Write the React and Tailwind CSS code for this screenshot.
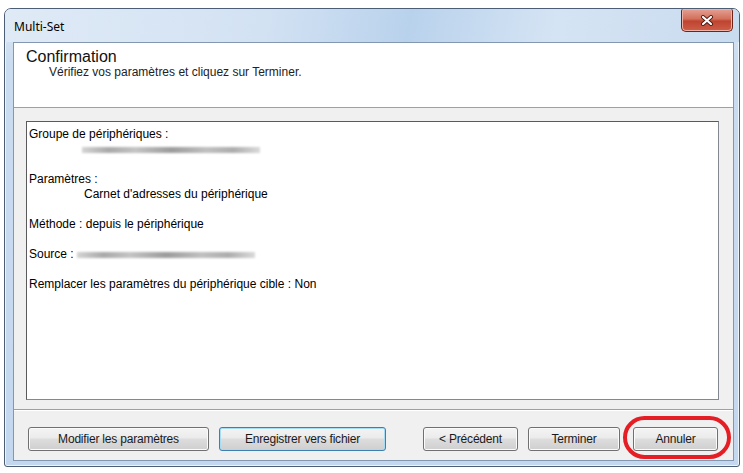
import React from "react";

const font = { fontFamily: '"Liberation Sans", Arial, sans-serif' };

const Blur = () => (
  <div className="h-[15px] flex items-center">
    <div className="h-[6px] w-[178px] blur-[1px] bg-[linear-gradient(90deg,#d4d4d4_0%,#a9a9a9_15%,#c4c4c4_30%,#9c9c9c_50%,#c0c0c0_70%,#adadad_85%,#dadada_100%)]" />
  </div>
);

const Button = ({ label, width, focused }) => (
  <div
    className={`h-[24px] rounded-[3px] border flex items-center justify-center text-[12px] tracking-[-0.2px] text-[#1a1a1a] bg-[linear-gradient(180deg,#f4f4f4_0%,#ebebeb_45%,#dddddd_50%,#cfcfcf_100%)] ${
      focused
        ? "border-[#3c7fb1] shadow-[inset_0_0_0_1px_#a8dcf5]"
        : "border-[#707070] shadow-[inset_0_0_0_1px_#fbfbfb]"
    }`}
    style={{ width }}
  >
    {label}
  </div>
);

export default function App() {
  return (
    <div className="w-[743px] h-[473px] bg-white relative overflow-hidden" style={font}>
      <div className="ml-[4px] mt-[8px] w-[736px] h-[459px] border border-[#4c5e75] rounded-t-[7px] rounded-b-[3px] flex flex-col bg-[linear-gradient(180deg,#dce8f5_0%,#cadcf0_12%,#c3d7ee_100%)] shadow-[inset_0_0_0_1px_#eef4fb]">
        {/* title bar */}
        <div className="h-[33px] flex justify-between items-start bg-[linear-gradient(100deg,#dfeaf6_0%,#d3e2f3_35%,#b9d2ec_55%,#d5e4f4_75%,#c9dbef_100%)] rounded-t-[6px]">
          <div className="pl-[9px] pt-[10px] text-[12px] text-black leading-[15px]" style={{ fontFamily: '"Noto Sans", "Liberation Sans", sans-serif' }}>
            Multi-Set
          </div>
          <div className="mr-[6px] w-[52px] h-[23px] rounded-b-[5px] rounded-t-[2px] border border-[#6e2418] border-t-0 flex items-center justify-center bg-[linear-gradient(180deg,#e3a194_0%,#d4705c_45%,#bf4430_55%,#cc5f49_100%)] shadow-[inset_0_0_0_1px_#eeb2a6]">
            <svg width="14" height="11" viewBox="0 0 14 11">
              <path d="M3 2 L11 9 M11 2 L3 9" stroke="#4a1a12" strokeWidth="4" strokeLinecap="round" />
              <path d="M3 2 L11 9 M11 2 L3 9" stroke="#ffffff" strokeWidth="2.2" strokeLinecap="round" />
            </svg>
          </div>
        </div>

        {/* client area */}
        <div className="flex-1 ml-[8px] mr-[5px] mb-[5px] border border-[#8497b0] flex flex-col bg-[#f0f0f0]">
          <div className="h-[65px] bg-white border-b border-[#a0a0a0] pl-[12px] pt-[5px]">
            <div className="text-[16px] leading-[17px] text-[#111]">Confirmation</div>
            <div className="text-[12px] leading-[14px] text-[#222] pl-[23px]">
              Vérifiez vos paramètres et cliquez sur Terminer.
            </div>
          </div>

          <div className="flex-1 flex flex-col">
            <div className="pt-[13px] pl-[12px] pr-[14px]">
              <div className="h-[279px] bg-white border border-[#828790] border-t-[#5a5a5a] border-l-[#5a5a5a] pt-[5px] pl-[2px] text-[12px] leading-[15px] text-black">
                <div>Groupe de périphériques :</div>
                <div className="pl-[53px]">
                  <Blur />
                </div>
                <div className="h-[15px]" />
                <div>Paramètres :</div>
                <div className="pl-[55px]">Carnet d'adresses du périphérique</div>
                <div className="h-[15px]" />
                <div>Méthode : depuis le périphérique</div>
                <div className="h-[15px]" />
                <div className="flex items-center gap-[3px]">
                  <span>Source :</span>
                  <Blur />
                </div>
                <div className="h-[15px]" />
                <div>Remplacer les paramètres du périphérique cible : Non</div>
              </div>
            </div>

            <div className="mt-[9px] border-t border-[#a0a0a0] border-b border-b-white" />

            <div className="mt-[16px] flex items-center pl-[14px]">
              <Button label="Modifier les paramètres" width={181} />
              <div className="ml-[10px]">
                <Button label="Enregistrer vers fichier" width={167} focused />
              </div>
              <div className="ml-[37px]">
                <Button label="< Précédent" width={95} />
              </div>
              <div className="ml-[10px]">
                <Button label="Terminer" width={92} />
              </div>
              <div className="ml-[13px]">
                <Button label="Annuler" width={85} />
              </div>
            </div>
          </div>
        </div>
      </div>

      {/* red annotation ring */}
      <div className="absolute left-[623px] top-[416px] w-[108px] h-[43px] rounded-[22px] border-[4px] border-[#e51d24]" />
    </div>
  );
}
